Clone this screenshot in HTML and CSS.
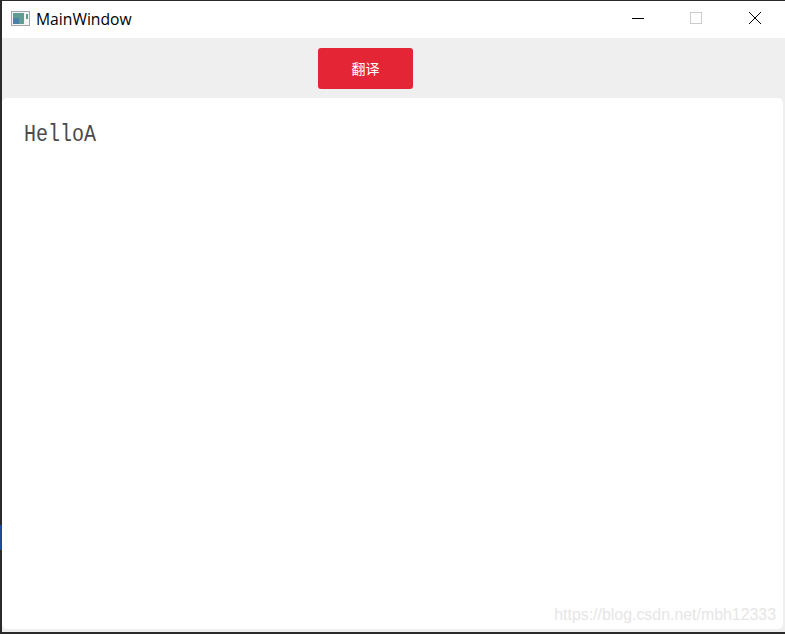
FILE: index.html
```html
<!DOCTYPE html>
<html lang="en">
<head>
    <meta charset="UTF-8">
    <title>MainWindow</title>
    <link rel="stylesheet" href="styles.css">
</head>
<body>
    <div class="window">
        <div class="title-bar">
            <svg class="app-icon" width="20" height="16" viewBox="0 0 20 16">
                <rect x="0.5" y="0.5" width="18" height="14" fill="#f4f4f4" stroke="#a3a6aa"/>
                <rect x="2" y="2" width="11" height="11" fill="#5f9c94"/>
                <rect x="2" y="7" width="6" height="6" fill="#4a7fa8"/>
                <rect x="15" y="3" width="2" height="5" fill="#5fa08a"/>
            </svg>
            <span class="title">MainWindow</span>
            <div class="controls">
                <svg class="control" width="14" height="14" viewBox="0 0 14 14">
                    <path d="M0 6.5H12" stroke="#000" fill="none"/>
                </svg>
                <svg class="control" width="14" height="14" viewBox="0 0 14 14">
                    <rect x="0.5" y="0.5" width="11" height="11" stroke="#cccccc" fill="none"/>
                </svg>
                <svg class="control control-close" width="14" height="14" viewBox="0 0 14 14">
                    <path d="M0 0L12 12M12 0L0 12" stroke="#000" fill="none"/>
                </svg>
            </div>
        </div>
        <div class="toolbar">
            <button class="translate-btn" type="button">翻译</button>
        </div>
        <div class="content">
            <p class="content-text"><span class="hello">HelloA</span></p>
        </div>
    </div>
    <div class="edge-mark"></div>
    <div class="watermark">https://blog.csdn.net/mbh12333</div>
</body>
</html>
```

FILE: styles.css
```css
html, body {
    height: 100%;
}

body {
    margin: 0;
    overflow: hidden;
    font-family: "Liberation Sans", "Noto Sans CJK SC", sans-serif;
    background-color: #2a2a2a;
}

.window {
    display: flex;
    flex-direction: column;
    box-sizing: border-box;
    height: 634px;
    padding: 1px 0 2px 2px;
}

.title-bar {
    display: flex;
    align-items: center;
    height: 37px;
    flex-shrink: 0;
    box-sizing: border-box;
    padding: 0 0 2px 9px;
    background-color: #ffffff;
}

.app-icon {
    margin-right: 5px;
}

.title {
    font-family: "Open Sans", "Noto Sans", sans-serif;
    font-size: 15.7px;
    color: #000000;
}

.controls {
    display: flex;
    margin-left: auto;
    padding-right: 22px;
    gap: 44px;
}

.control {
    display: block;
}

.control-close {
    margin-left: 1px;
}

.toolbar {
    display: flex;
    flex-shrink: 0;
    height: 60px;
    box-sizing: border-box;
    padding: 10px 0 0 316px;
    background-color: #efefef;
}

.translate-btn {
    width: 95px;
    height: 41px;
    padding: 0 0 2px 0;
    font-family: "Noto Sans CJK SC", sans-serif;
    font-size: 14px;
    color: #ffffff;
    background-color: #e42535;
    border: none;
    border-radius: 3px;
}

.content {
    flex: 1;
    padding: 0 2px 3px 0;
    background-color: #efefef;
}

.content-text {
    margin: 0;
    height: 100%;
    box-sizing: border-box;
    padding: 22px 22px;
    font-family: "Liberation Mono", "DejaVu Sans Mono", monospace;
    font-size: 24px;
    line-height: 30px;
    color: #4a4a4a;
    background-color: #ffffff;
    border-radius: 5px;
}

.hello {
    display: inline-block;
    transform: scaleX(0.833);
    transform-origin: left center;
}

.edge-mark {
    position: absolute;
    left: 0;
    top: 525px;
    width: 2px;
    height: 25px;
    background-color: #1d4a9a;
}

.watermark {
    position: absolute;
    right: 9px;
    top: 606px;
    font-size: 15.9px;
    color: #e6e6e6;
}
```
